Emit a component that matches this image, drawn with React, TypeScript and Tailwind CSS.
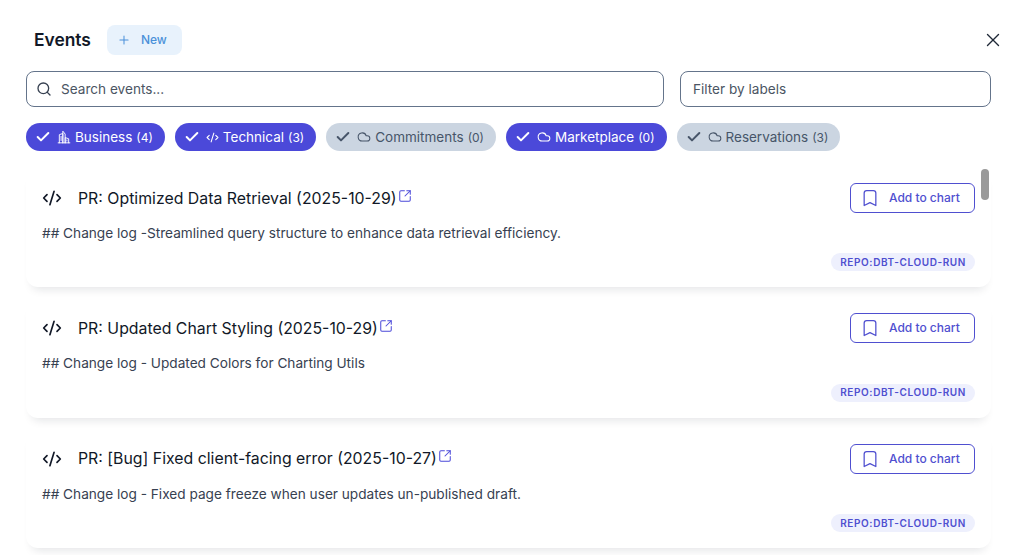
import { Check, Cloud, Code2, Plus, Search, SquareArrowOutUpRight, X } from "lucide-react";

const chips = [
  { label: "Business", count: 4, on: true, icon: "building" },
  { label: "Technical", count: 3, on: true, icon: "code" },
  { label: "Commitments", count: 0, on: false, icon: "cloud" },
  { label: "Marketplace", count: 0, on: true, icon: "cloud" },
  { label: "Reservations", count: 3, on: false, icon: "cloud" },
];

const events = [
  { title: "PR: Optimized Data Retrieval (2025-10-29)", text: "## Change log -Streamlined query structure to enhance data retrieval efficiency." },
  { title: "PR: Updated Chart Styling (2025-10-29)", text: "## Change log - Updated Colors for Charting Utils" },
  { title: "PR: [Bug] Fixed client-facing error (2025-10-27)", text: "## Change log - Fixed page freeze when user updates un-published draft." },
];

const ChipIcon = ({ name }: { name: string }) => {
  if (name === "building")
    return (
      <svg className="h-[14px] w-[14px]" viewBox="0 0 24 24" fill="none" stroke="currentColor" strokeWidth={1.6} strokeLinecap="round" strokeLinejoin="round">
        <path d="M2 22h20M4 22V8l6-2v16M10 22V2l4 5v15M14 22v-9l6 2v7M7 11v7M17 17v2" />
      </svg>
    );
  if (name === "code") return <Code2 className="h-[13px] w-[13px]" strokeWidth={2} />;
  return <Cloud className="h-[14px] w-[14px]" strokeWidth={1.75} />;
};

export default function App() {
  return (
    <div className="relative h-[555px] w-[1032px] overflow-hidden bg-white font-['Inter',sans-serif] text-[#111827]">
      <div className="flex h-[71px] items-start justify-between pl-[34px] pr-[28px] pt-[25px]">
        <div className="flex items-center gap-4">
          <h1 className="text-[17.4px] leading-[30px] font-semibold text-[#111827]">Events</h1>
          <button className="flex h-[30px] w-[75px] items-center gap-[10px] rounded-lg bg-[#e8f2fc] pl-[10px] text-xs font-medium text-[#4a90d9]">
            <Plus className="h-[14px] w-[14px]" strokeWidth={1.75} />
            New
          </button>
        </div>
        <X className="mt-1 h-[22px] w-[22px] text-[#1f2937]" strokeWidth={1.5} />
      </div>

      <div className="flex gap-4 pl-[26px] pr-[41px]">
        <div className="flex h-9 flex-1 items-center gap-[9px] rounded-lg border border-[#64748b] pl-[9px]">
          <Search className="h-4 w-4 text-[#374151]" strokeWidth={2} />
          <span className="pt-px text-[13.6px] text-[#4b5563]">Search events...</span>
        </div>
        <div className="flex h-9 w-[311px] items-center rounded-lg border border-[#64748b] pl-3">
          <span className="pt-px text-[13.6px] text-[#4b5563]">Filter by labels</span>
        </div>
      </div>

      <div className="mt-4 flex gap-[10px] pl-[26px]">
        {chips.map((c) => (
          <div
            key={c.label}
            className={
              c.on
                ? "flex h-7 items-center rounded-full bg-[#4b49d9] pl-[9px] pr-3 text-white"
                : "flex h-7 items-center rounded-full bg-[#cbd5e1] pl-[9px] pr-3 text-[#475569]"
            }
          >
            <Check className="mr-[6px] h-4 w-4" strokeWidth={3} />
            <span className="mr-[4px]">
              <ChipIcon name={c.icon} />
            </span>
            <span className="pt-px text-[13.5px] leading-none">{c.label}</span>
            <span className="ml-[4px] pt-px text-xs leading-none">({c.count})</span>
          </div>
        ))}
      </div>

      <div className="mt-4 ml-[26px] mr-[41px] flex flex-col gap-[10px]">
        {events.map((e) => (
          <div key={e.title} className="h-[120.4px] shrink-0 rounded-xl bg-white px-4 pt-4 shadow-[0_8px_10px_-6px_rgba(15,23,42,0.12)]">
            <div className="flex h-[30px] items-center justify-between">
              <div className="flex items-center">
                <Code2 className="mr-[16px] h-5 w-5 text-[#111827]" strokeWidth={2} />
                <span className="pt-px text-[15.85px] leading-6 text-[#111827]">{e.title}</span>
                <SquareArrowOutUpRight className="mb-[5px] ml-px h-[14px] w-[14px] text-[#4b49d9]" strokeWidth={1.75} />
              </div>
              <button className="flex h-[30px] w-[125px] items-center gap-[9px] rounded-md border border-[#4f4fd0] pl-[9px] text-xs font-medium text-[#4f4fd0]">
                <svg className="h-5 w-5" viewBox="0 0 24 24" fill="none" stroke="currentColor" strokeWidth={1.5} strokeLinecap="round" strokeLinejoin="round">
                  <path d="M5 6a3 3 0 0 1 3-3h8a3 3 0 0 1 3 3v15l-7-3.5L5 21V6z" />
                </svg>
                Add to chart
              </button>
            </div>
            <p className="mt-[10px] text-[13.65px] leading-5 text-[#374151]">{e.text}</p>
            <div className="mt-[10.4px] flex justify-end">
              <span className="flex h-[18px] items-center rounded-full bg-[#eef0fd] px-[9px] text-[10px] font-semibold tracking-[0.06em] text-[#4f4fd0]">
                REPO:DBT-CLOUD-RUN
              </span>
            </div>
          </div>
        ))}
      </div>

      <div className="absolute left-[981px] top-[169px] h-[31px] w-2 rounded-full bg-[#9a9a9a]" />
    </div>
  );
}
